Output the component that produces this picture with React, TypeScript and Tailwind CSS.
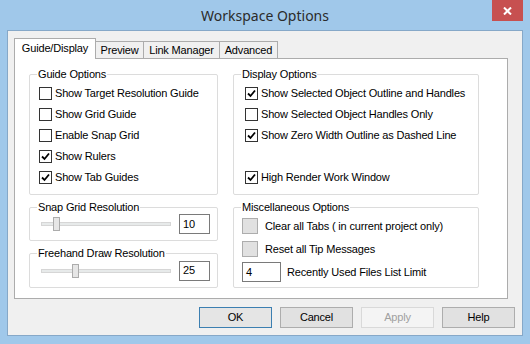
import React from "react";

const UI = "font-['Liberation_Sans',Arial,sans-serif]";

function Check({ checked }: { checked: boolean }) {
  return (
    <span className="w-[13px] h-[13px] border border-[#333333] bg-white flex items-center justify-center shrink-0">
      {checked && (
        <svg width="9" height="9" viewBox="0 0 9 9">
          <path d="M1 4.5 L3.5 7 L8 1.5" fill="none" stroke="#000" strokeWidth="1.8" />
        </svg>
      )}
    </span>
  );
}

function CheckRow({ label, checked }: { label: string; checked: boolean }) {
  return (
    <div className="h-[21px] flex items-center gap-[3px]">
      <Check checked={checked} />
      <span className="whitespace-nowrap">{label}</span>
    </div>
  );
}

function Group({
  title,
  className,
  children,
}: {
  title: string;
  className: string;
  children: React.ReactNode;
}) {
  return (
    <div className={`relative border border-[#dcdcdc] rounded-[2px] ${className}`}>
      <span className="absolute top-[-8px] left-[7px] px-[1px] bg-white leading-[14px] whitespace-nowrap">
        {title}
      </span>
      {children}
    </div>
  );
}

function Slider({ thumb, value }: { thumb: number; value: string }) {
  return (
    <div className="flex items-center h-full pl-[11px]">
      <div className="relative w-[130px] h-[4px] border border-[#d6d6d6] bg-[#e7eaea]">
        <span
          className="absolute top-[-6px] w-[7px] h-[14px] border border-[#acacac] bg-[#e6e6e6]"
          style={{ left: thumb }}
        />
      </div>
      <div className="ml-[8px] w-[31px] h-[20px] border border-[#7a7a7a] bg-white pl-[3px] flex items-center">
        {value}
      </div>
    </div>
  );
}

function Button({ label, kind }: { label: string; kind?: "default" | "disabled" }) {
  const cls =
    kind === "default"
      ? "border-[#3c7fb1] bg-[#e5e5e5] text-black"
      : kind === "disabled"
        ? "border-[#d9d9d9] bg-[#f4f4f4] text-[#a0a0a0]"
        : "border-[#adadad] bg-[#e1e1e1] text-black";
  return (
    <div className={`w-[73px] h-[21px] border flex items-center justify-center ${cls}`}>
      {label}
    </div>
  );
}

export default function App() {
  return (
    <div className={`w-[530px] h-[344px] bg-[#a0c8ea] flex flex-col text-[11px] tracking-[-0.17px] text-black ${UI}`}>
      {/* title bar */}
      <div className="relative h-[30px] flex items-center justify-center">
        <span className="font-['Noto_Sans',sans-serif] text-[14px] tracking-normal text-[#2b2b2b] pt-[1px]">
          Workspace Options
        </span>
        <div className="absolute right-[7px] top-0 w-[31px] h-[21px] bg-[#c75050] flex items-center justify-center">
          <svg width="9" height="8" viewBox="0 0 9 8">
            <path d="M1 0.5 L8 7.5 M8 0.5 L1 7.5" stroke="#fff" strokeWidth="2" />
          </svg>
        </div>
      </div>

      {/* client area */}
      <div className="mx-[7px] h-[306px] border border-[#86a8c8] bg-[#f0f0f0] pt-[7px] pl-[6px] pr-[7px]">
        <div className="flex items-end h-[20px]">
          <div className="relative z-10 -mb-px w-[82px] h-[21px] border border-b-0 border-[#acacac] bg-white flex items-center justify-center pb-[1px]">
            Guide/Display
          </div>
          <div className="-ml-px w-[49px] h-[17px] border border-b-0 border-[#acacac] bg-[#f0f0f0] flex items-center justify-center">
            Preview
          </div>
          <div className="-ml-px w-[77px] h-[17px] border border-b-0 border-[#acacac] bg-[#f0f0f0] flex items-center justify-center">
            Link Manager
          </div>
          <div className="-ml-px w-[59px] h-[17px] border border-b-0 border-[#acacac] bg-[#f0f0f0] flex items-center justify-center">
            Advanced
          </div>
        </div>

        <div className="w-[494px] h-[241px] border border-[#acacac] bg-white pt-[15px] pl-[14px] flex gap-[15px]">
          <div className="w-[189px] flex flex-col gap-[12px]">
            <Group title="Guide Options" className="h-[121px] pt-[8px] pl-[9px]">
              <CheckRow label="Show Target Resolution Guide" checked={false} />
              <CheckRow label="Show Grid Guide" checked={false} />
              <CheckRow label="Enable Snap Grid" checked={false} />
              <CheckRow label="Show Rulers" checked />
              <CheckRow label="Show Tab Guides" checked />
            </Group>
            <Group title="Snap Grid Resolution" className="h-[34px]">
              <Slider thumb={11} value="10" />
            </Group>
            <Group title="Freehand Draw Resolution" className="h-[35px]">
              <Slider thumb={30} value="25" />
            </Group>
          </div>

          <div className="w-[246px] flex flex-col gap-[12px]">
            <Group title="Display Options" className="h-[121px] pt-[8px] pl-[11px]">
              <CheckRow label="Show Selected Object Outline and Handles" checked />
              <CheckRow label="Show Selected Object Handles Only" checked={false} />
              <CheckRow label="Show Zero Width Outline as Dashed Line" checked />
              <div className="h-[21px]" />
              <CheckRow label="High Render Work Window" checked />
            </Group>
            <Group title="Miscellaneous Options" className="h-[81px] pt-[10px] pl-[8px] flex flex-col">
              <div className="h-[16px] flex items-center gap-[7px]">
                <span className="w-[16px] h-[16px] border border-[#adadad] bg-[#e1e1e1]" />
                <span>Clear all Tabs ( in current project only)</span>
              </div>
              <div className="mt-[7px] h-[16px] flex items-center gap-[7px]">
                <span className="w-[16px] h-[16px] border border-[#adadad] bg-[#e1e1e1]" />
                <span>Reset all Tip Messages</span>
              </div>
              <div className="mt-[5px] h-[20px] flex items-center gap-[6px]">
                <span className="w-[39px] h-[20px] border border-[#7a7a7a] bg-white pl-[3px] flex items-center">
                  4
                </span>
                <span>Recently Used Files List Limit</span>
              </div>
            </Group>
          </div>
        </div>

        <div className="mt-[8px] flex justify-end gap-[8px]">
          <Button label="OK" kind="default" />
          <Button label="Cancel" />
          <Button label="Apply" kind="disabled" />
          <Button label="Help" />
        </div>
      </div>
    </div>
  );
}
